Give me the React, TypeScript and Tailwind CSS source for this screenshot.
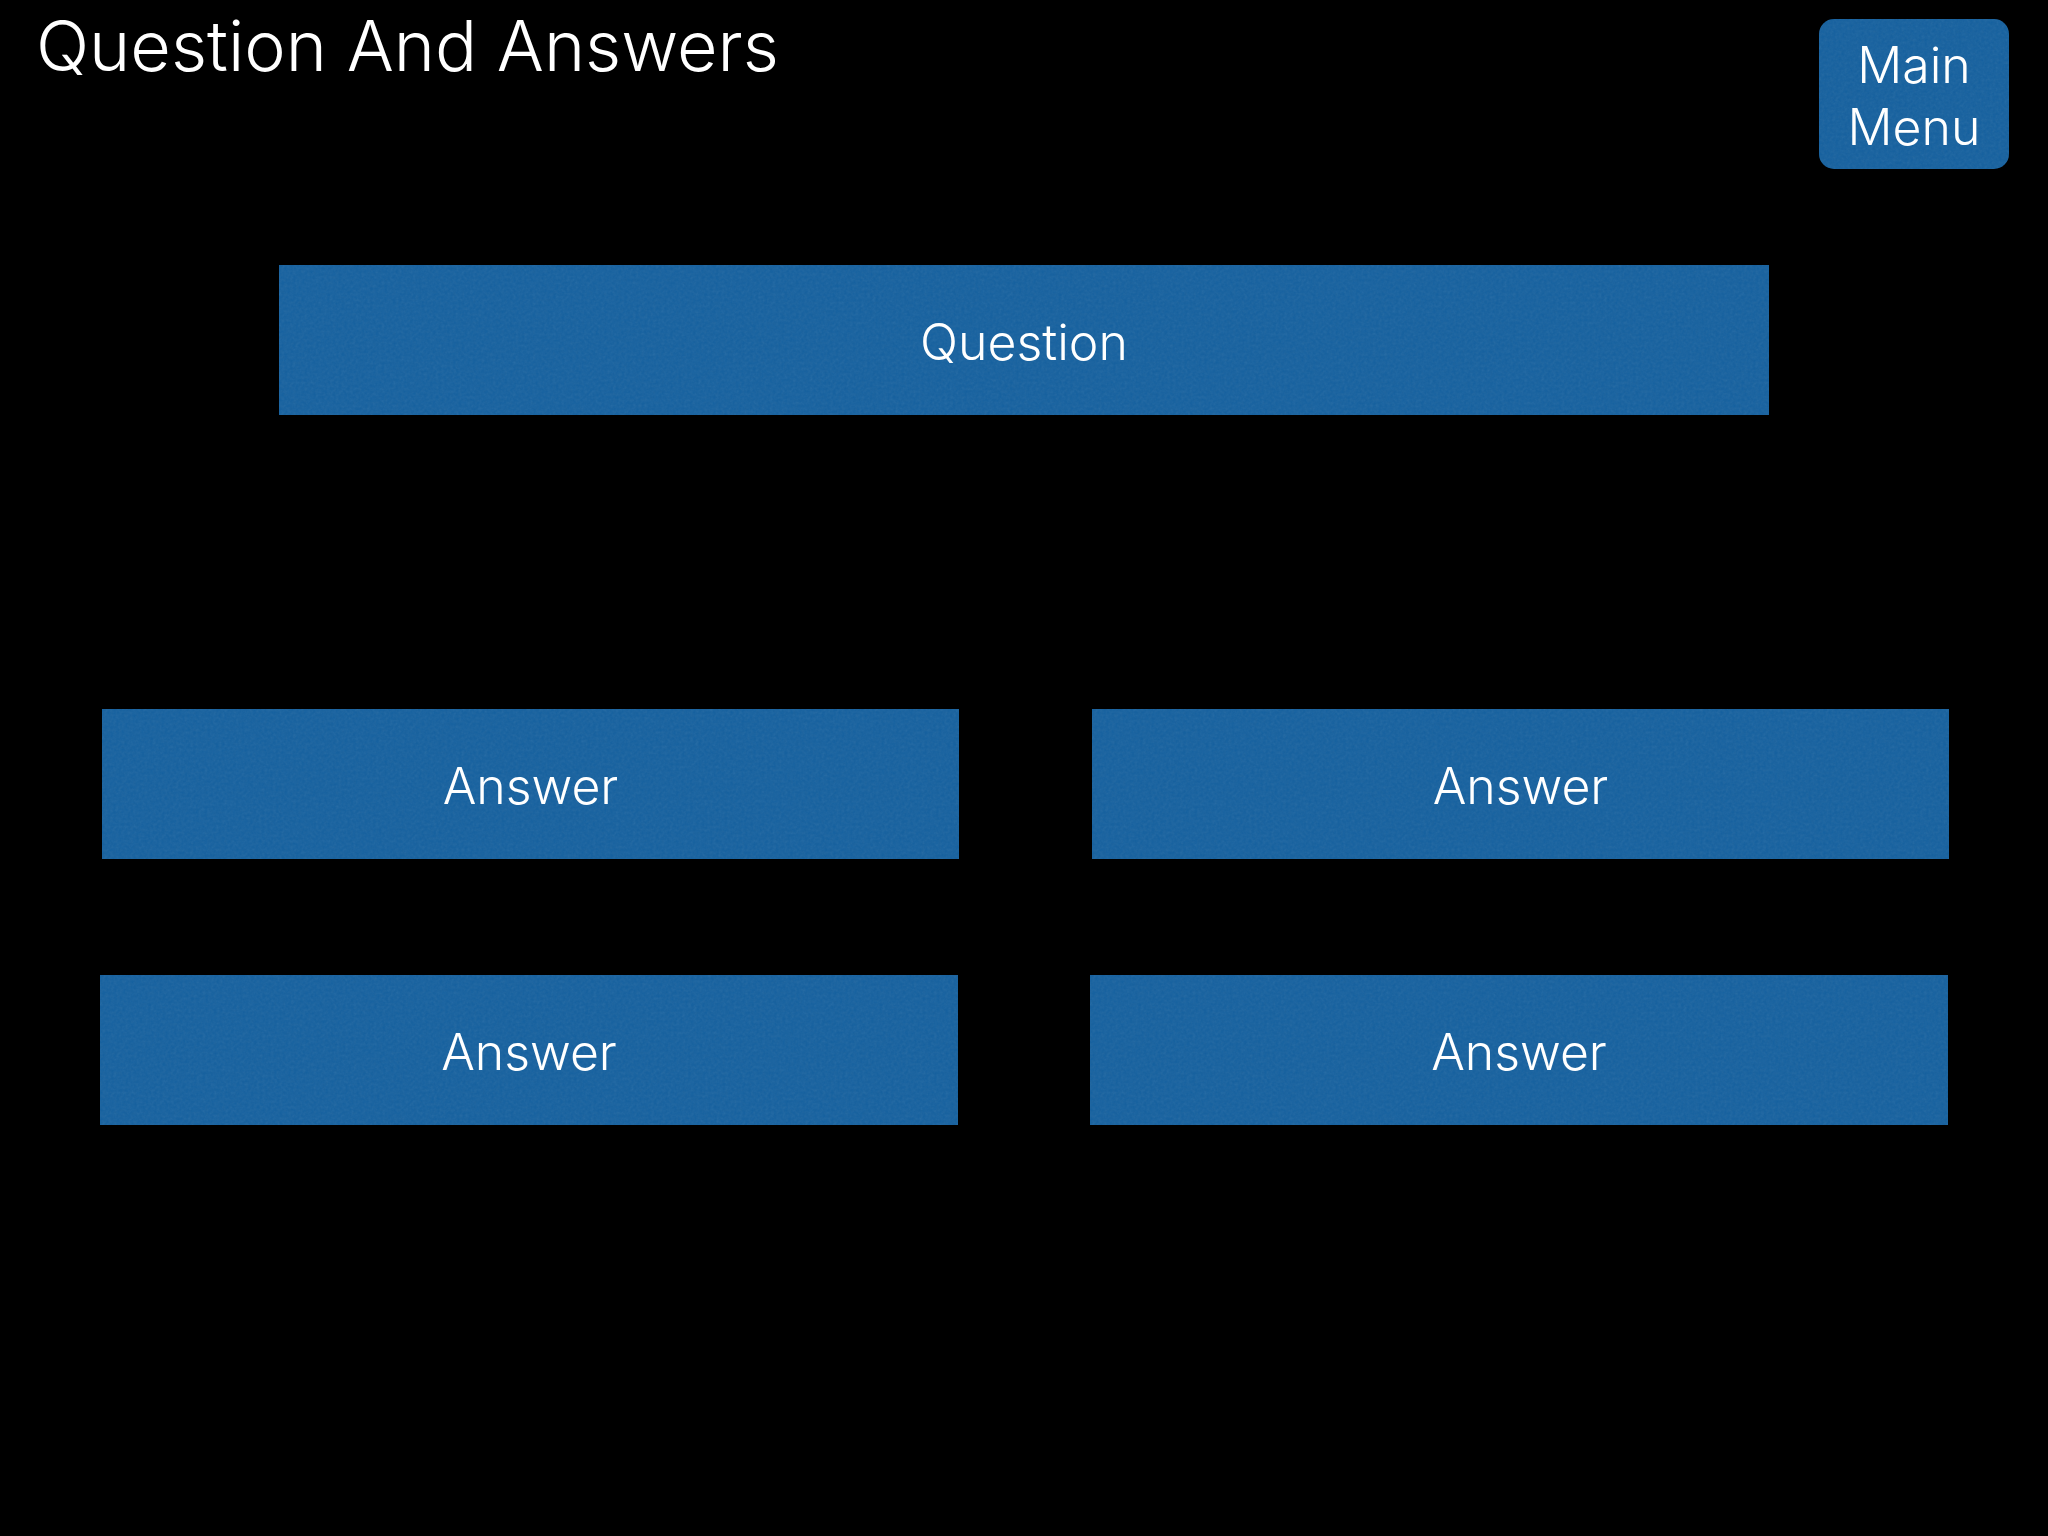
import type { ReactNode } from "react";

function Grain() {
  return (
    <svg className="pointer-events-none absolute inset-0 h-full w-full opacity-10" aria-hidden="true">
      <filter id="grain" x="0" y="0" width="100%" height="100%">
        <feTurbulence type="fractalNoise" baseFrequency="0.35" numOctaves="2" />
        <feColorMatrix type="saturate" values="0" />
      </filter>
      <rect width="100%" height="100%" filter="url(#grain)" />
    </svg>
  );
}

function AnswerButton({ children }: { children: ReactNode }) {
  return (
    <button
      type="button"
      className="relative flex h-[150px] items-center justify-center bg-[#14609f] pt-1 text-[50px] leading-[62px] font-light"
    >
      <Grain />
      <span className="relative">{children}</span>
    </button>
  );
}

export default function App() {
  return (
    <div className="min-h-screen bg-black pb-16 font-['Inter','Liberation_Sans',sans-serif] text-white">
      <header className="flex items-start justify-between pr-[39px] pl-[36px]">
        <h1 className="pt-[2px] text-[70px] leading-[88px] font-light">Question And Answers</h1>
        <button
          type="button"
          className="relative mt-[19px] flex h-[150px] w-[190px] items-center justify-center overflow-hidden rounded-[15px] bg-[#14609f] pt-1 text-[50px] leading-[62px] font-light"
        >
          <Grain />
          <span className="relative">
            Main
            <br />
            Menu
          </span>
        </button>
      </header>

      <main>
        <section className="relative mx-[279px] mt-24 flex h-[150px] items-center justify-center bg-[#14609f] pt-1">
          <Grain />
          <h2 className="relative text-[50px] leading-[62px] font-light">Question</h2>
        </section>

        <div className="mt-[294px] grid grid-cols-2 gap-[133px] pr-[99px] pl-[102px]">
          <AnswerButton>Answer</AnswerButton>
          <AnswerButton>Answer</AnswerButton>
        </div>
        <div className="mt-[116px] grid grid-cols-2 gap-[132px] px-[100px]">
          <AnswerButton>Answer</AnswerButton>
          <AnswerButton>Answer</AnswerButton>
        </div>
      </main>
    </div>
  );
}
